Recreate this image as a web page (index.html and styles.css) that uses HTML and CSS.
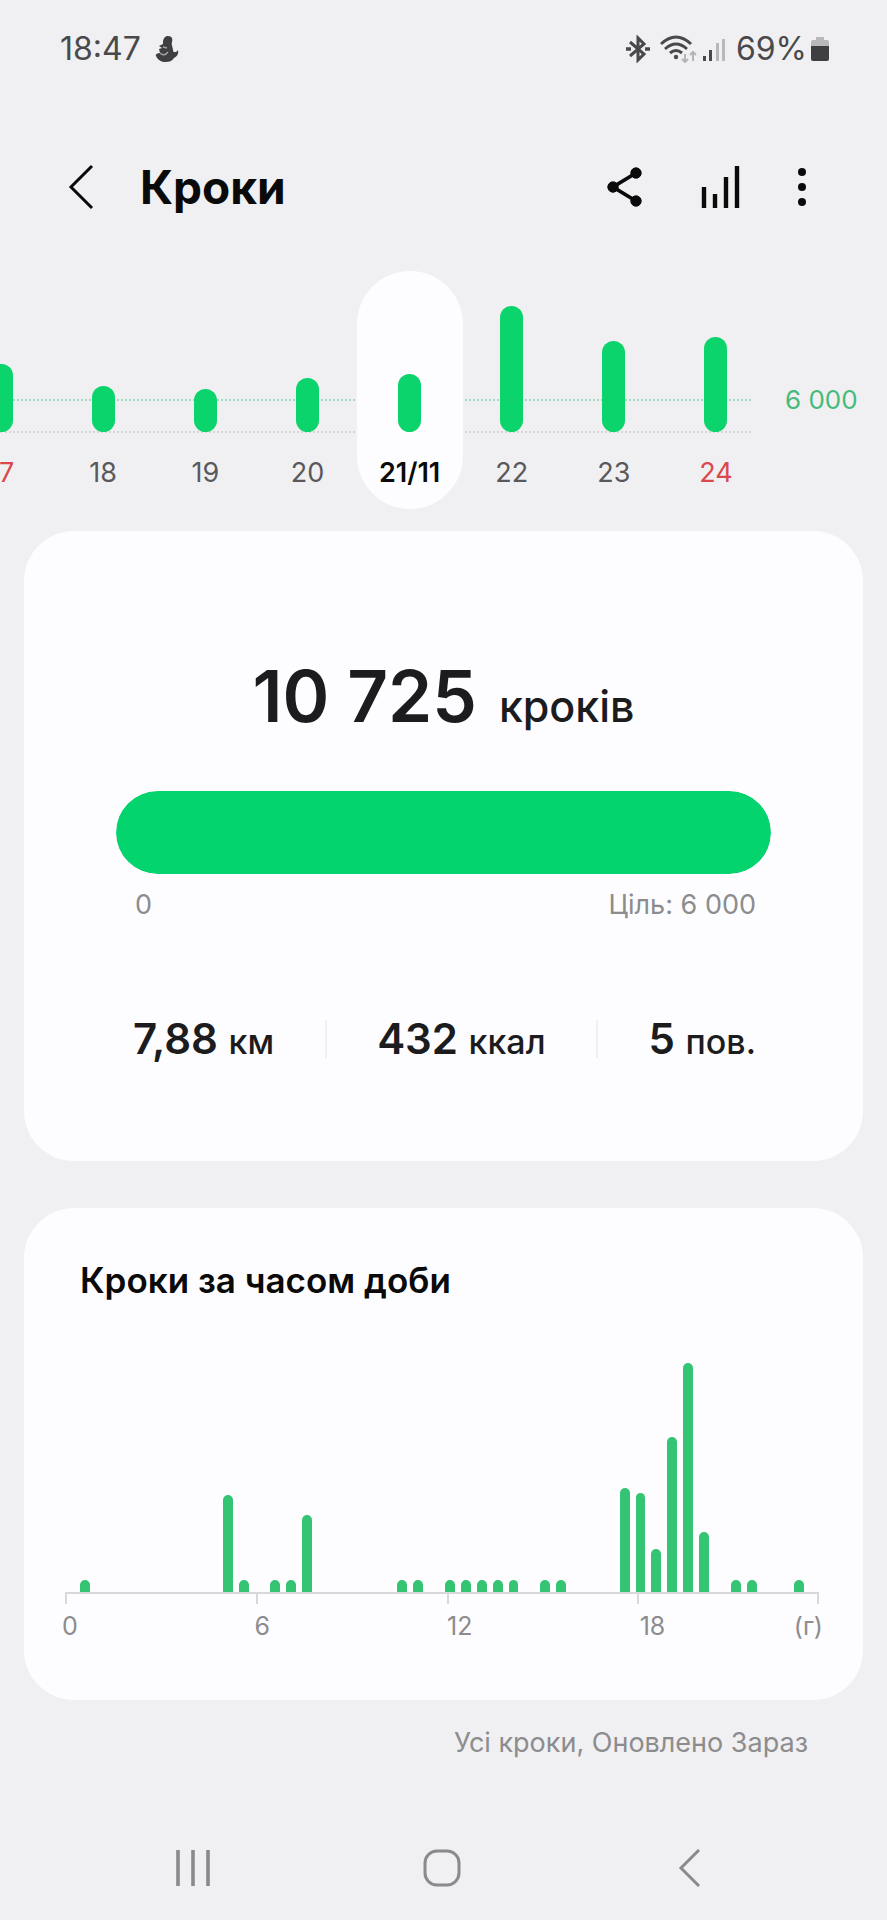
FILE: index.html
```
<!DOCTYPE html>
<html lang="uk">
<head>
    <meta charset="UTF-8">
    <meta name="viewport" content="width=device-width, initial-scale=1">
    <title>Кроки</title>
    <link rel="stylesheet" href="styles.css">
</head>
<body>
<div class="status">
    <span class="time">18:47</span>
    <svg class="duck" width="24" height="26" viewBox="0 0 24 26">
        <path d="M8 5 C9 1 11 0 13 0 C17 0 18 3 17 6 C16 9 18 11 18 14 C18 17 21 17 23 14 C24 19 21 21 19 22 C17 25 14 26 11 26 C6 26 3 24 1 20 C0 18 3 17 5 17 L4 13 L7 12 L4 10 L8 8 Z" fill="#3f3f41"/>
        <path d="M5 17 Q9 21 13 16 M8 11 L12 12" fill="none" stroke="#a4a4a6" stroke-width="1.4"/>
    </svg>
    <div class="status-right">
        <svg width="24" height="28" viewBox="0 0 24 28" fill="none" stroke="#49494b" stroke-width="3">
            <path d="M4 7 L18 19 L12 25 V3 L18 9 L4 21"/>
            <path d="M0 14 H5 M19 14 H24" stroke-width="3.6"/>
        </svg>
        <svg class="wifi" width="38" height="28" viewBox="0 0 38 28" fill="none" stroke="#49494b" stroke-width="3">
            <path d="M1 9 Q16 -5 31 9 M5 14 Q16 4 27 14 M10 18 Q16 13 22 18"/>
            <circle cx="16" cy="22" r="2.2" fill="#49494b" stroke="none"/>
            <path d="M25 19 V27 M22 24 L25 27 L28 24 M33 26 V17 M30 20 L33 17 L36 20" stroke="#b4b4b6" stroke-width="2"/>
        </svg>
        <svg width="24" height="28" viewBox="0 0 24 28">
            <path d="M1 21 H4 V26 H1 Z M7 15 H10 V26 H7 Z" fill="#49494b"/>
            <path d="M14 8 H17 V26 H14 Z M20 4 H23 V26 H20 Z" fill="#b8b8ba"/>
        </svg>
        <span class="percent">69%</span>
        <svg width="18" height="26" viewBox="0 0 18 26">
            <path d="M5 1 H13 V4 H16 Q18 4 18 6 V12 H0 V6 Q0 4 2 4 H5 Z" fill="#b8b8ba"/>
            <path d="M0 10 H18 V23 Q18 25 16 25 H2 Q0 25 0 23 Z" fill="#3f3f41"/>
        </svg>
    </div>
</div>

<header class="header">
    <button class="icon-btn" aria-label="Назад">
        <svg width="26" height="46" viewBox="0 0 26 46" fill="none" stroke="#0a0a0a" stroke-width="3">
            <path d="M24 2 L3 23 L24 44"/>
        </svg>
    </button>
    <h1>Кроки</h1>
    <div class="actions">
        <button class="icon-btn" aria-label="Поділитися">
            <svg width="36" height="40" viewBox="0 0 36 40" fill="#0a0a0a" stroke="#0a0a0a">
                <path d="M29 6 L6 20 L29 34" fill="none" stroke-width="3.8"/>
                <circle cx="29" cy="6" r="5.2"/>
                <circle cx="6" cy="20" r="5.2"/>
                <circle cx="29" cy="34" r="5.2"/>
            </svg>
        </button>
        <button class="icon-btn" aria-label="Статистика">
            <svg width="40" height="44" viewBox="0 0 40 44" stroke="#0a0a0a" stroke-width="4.4">
                <path d="M4 22 V43 M15 29 V43 M26 12 V43 M37 1 V43"/>
            </svg>
        </button>
        <button class="icon-btn" aria-label="Більше">
            <svg width="10" height="40" viewBox="0 0 10 40" fill="#0a0a0a">
                <circle cx="5" cy="5" r="4"/>
                <circle cx="5" cy="20" r="4"/>
                <circle cx="5" cy="35" r="4"/>
            </svg>
        </button>
    </div>
</header>

<div class="week">
    <div class="line line-goal"></div>
    <div class="line line-base"></div>
    <div class="days">
        <button class="day red"><span class="col"><i style="height:68px"></i></span>17</button>
        <button class="day"><span class="col"><i style="height:46px"></i></span>18</button>
        <button class="day"><span class="col"><i style="height:43px"></i></span>19</button>
        <button class="day"><span class="col"><i style="height:54px"></i></span>20</button>
        <button class="day on"><span class="col"><i style="height:58px"></i></span>21/11</button>
        <button class="day"><span class="col"><i style="height:126px"></i></span>22</button>
        <button class="day"><span class="col"><i style="height:91px"></i></span>23</button>
        <button class="day red"><span class="col"><i style="height:95px"></i></span>24</button>
    </div>
    <span class="goal">6 000</span>
</div>

<main>
    <section class="card total">
        <p class="count">10 725 <small>кроків</small></p>
        <div class="progress" role="progressbar" aria-label="Кроки" aria-valuemin="0" aria-valuemax="6000" aria-valuenow="6000">
            <div class="fill" style="width:100%"></div>
        </div>
        <div class="range"><span>0</span><span>Ціль: 6 000</span></div>
        <div class="stats">
            <span>7,88 <small>км</small></span>
            <i></i>
            <span>432 <small>ккал</small></span>
            <i></i>
            <span>5 <small>пов.</small></span>
        </div>
    </section>

    <section class="card hours">
        <h2>Кроки за часом доби</h2>
        <div class="bars" id="bars"></div>
        <div class="ticks"><i></i><i></i><i></i><i></i></div>
        <div class="labels"><span>0</span><span>6</span><span>12</span><span>18<b>(г)</b></span></div>
    </section>

    <p class="updated">Усі кроки, Оновлено Зараз</p>
</main>

<nav class="nav">
    <button class="nav-btn" aria-label="Останні">
        <svg width="36" height="38" viewBox="0 0 36 38" stroke="#8a8a8c" stroke-width="3.6">
            <path d="M3 1 V37 M18 1 V37 M33 1 V37"/>
        </svg>
    </button>
    <button class="nav-btn" aria-label="Головний екран">
        <svg width="38" height="38" viewBox="0 0 38 38" fill="none" stroke="#8a8a8c" stroke-width="3">
            <rect x="2" y="2" width="34" height="34" rx="12"/>
        </svg>
    </button>
    <button class="nav-btn" aria-label="Назад">
        <svg width="24" height="38" viewBox="0 0 24 38" fill="none" stroke="#8a8a8c" stroke-width="3">
            <path d="M21 1 L3 19 L21 37"/>
        </svg>
    </button>
</nav>

<script>
    (function () {
        // one value per half hour, in px
        var data = [
            0, 12, 0, 0, 0, 0, 0, 0, 0, 0, 97, 12,
            0, 12, 12, 77, 0, 0, 0, 0, 0, 12, 12, 0,
            12, 12, 12, 12, 12, 0, 12, 12, 0, 0, 0, 104,
            99, 43, 155, 229, 60, 0, 12, 12, 0, 0, 12, 0
        ];
        var bars = document.getElementById("bars");
        for (var i = 0; i < data.length; i++) {
            var bar = document.createElement("span");
            bar.style.height = data[i] + "px";
            bars.appendChild(bar);
        }
    })();
</script>
</body>
</html>
```
FILE: styles.css
```
* {
    box-sizing: border-box;
}

body, h1, h2, p {
    margin: 0;
}

body {
    display: flex;
    flex-direction: column;
    min-height: 100vh;
    background: #f0f0f2;
    color: #1c1c1e;
    font-family: Inter, "Liberation Sans", sans-serif;
    overflow-x: hidden;
}

button {
    padding: 0;
    border: none;
    background: none;
    font: inherit;
    color: inherit;
    cursor: pointer;
}

small {
    line-height: 1;
}

svg {
    display: block;
    flex: none;
}

.status {
    display: flex;
    align-items: center;
    padding: 28px 58px 28px 60px;
    font-size: 32px;
    line-height: 42px;
    color: #49494b;
}

.duck {
    margin-left: 14px;
}

.status-right {
    display: flex;
    align-items: center;
    margin-left: auto;
    gap: 4px;
}

.wifi {
    margin-left: 6px;
}

.percent {
    margin-left: 6px;
}

.header {
    display: flex;
    align-items: center;
    padding: 60px 80px 55px 68px;
    color: #0a0a0a;
}

.header h1 {
    margin-left: 46px;
    font-size: 46px;
    line-height: 58px;
    font-weight: 700;
}

.actions {
    display: flex;
    align-items: center;
    margin-left: auto;
    gap: 57px;
}

/* week strip */
.week {
    position: relative;
    display: flex;
    margin-bottom: 22px;
    overflow: hidden;
}

.line {
    position: absolute;
    left: 0;
    right: 136px;
    border-top: 2px dotted #d4d4d7;
}

.line-goal {
    top: 128px;
    border-color: #9fdcbc;
}

.line-base {
    top: 160px;
}

.days {
    position: relative;
    display: flex;
    flex: 1;
    margin-left: -50px;
}

.day {
    flex: 1 0 0;
    min-width: 0;
    padding-bottom: 16px;
    font-size: 27px;
    line-height: 40px;
    color: #59595b;
}

.day.red {
    color: #d9494d;
}

.day.on {
    margin: 0 -2px;
    flex-basis: 4px;
    border-radius: 54px;
    background: #fdfdff;
    color: #0a0a0a;
    font-weight: 600;
}

.col {
    display: flex;
    align-items: flex-end;
    justify-content: center;
    height: 161px;
    margin-bottom: 21px;
}

.col i {
    width: 23px;
    border-radius: 12px;
    background: #0cd46c;
}

.goal {
    width: 120px;
    padding: 109px 0 0 18px;
    font-size: 26px;
    line-height: 40px;
    color: #45bb7c;
    white-space: nowrap;
}

/* cards */
.card {
    margin: 0 24px 47px;
    border-radius: 50px;
    background: #fdfdff;
}

.total {
    padding: 121px 92px 94px;
}

.count {
    font-size: 71px;
    line-height: 88px;
    font-weight: 600;
    text-align: center;
}

.count small {
    margin-left: 4px;
    font-size: 43px;
    font-weight: 500;
}

.progress {
    margin-top: 51px;
    height: 83px;
    border-radius: 42px;
    background: #e4e4e6;
    overflow: hidden;
}

.fill {
    height: 100%;
    border-radius: 42px;
    background: #03d46e;
}

.range {
    display: flex;
    justify-content: space-between;
    margin-top: 13px;
    padding: 0 15px 0 19px;
    font-size: 27px;
    line-height: 36px;
    color: #8c8c8e;
}

.stats {
    display: flex;
    align-items: center;
    justify-content: space-between;
    margin-top: 88px;
    padding: 0 15px 0 17px;
    font-size: 42px;
    line-height: 56px;
    font-weight: 600;
    white-space: nowrap;
}

.stats small {
    font-size: 34px;
    font-weight: 500;
}

.stats i {
    width: 2px;
    height: 38px;
    background: #f0f0f2;
}

.hours {
    margin-bottom: 25px;
    padding: 48px 44px 58px 41px;
}

.hours h2 {
    margin-left: 15px;
    font-size: 35px;
    line-height: 48px;
    font-weight: 600;
    color: #0a0a0a;
}

.bars {
    display: flex;
    align-items: flex-end;
    height: 240px;
    margin: 48px -4px 0;
}

.bars span {
    flex: 1;
    margin: 0 3px;
    border-radius: 5px 5px 0 0;
    background: #35c474;
}

.ticks, .labels {
    display: grid;
    grid-template-columns: 21fr 21fr 21fr 20fr;
}

.ticks {
    border-top: 2px solid #d8d8da;
}

.ticks i {
    height: 10px;
    border-left: 2px solid #d8d8da;
}

.ticks i:last-child {
    border-right: 2px solid #d8d8da;
}

.labels {
    margin: 6px -4px 0 -3px;
    font-size: 25px;
    line-height: 32px;
    color: #8c8c8e;
}

.labels span {
    display: flex;
    justify-content: space-between;
}

.labels b {
    font-weight: 400;
}

.updated {
    padding: 0 79px;
    font-size: 27px;
    line-height: 36px;
    color: #8c8c8e;
    text-align: right;
}

.nav {
    display: flex;
    align-items: center;
    justify-content: space-between;
    height: 104px;
    margin-top: auto;
    padding: 0 167px 0 163px;
}

.nav-btn {
    display: flex;
    justify-content: center;
    width: 60px;
}
```
